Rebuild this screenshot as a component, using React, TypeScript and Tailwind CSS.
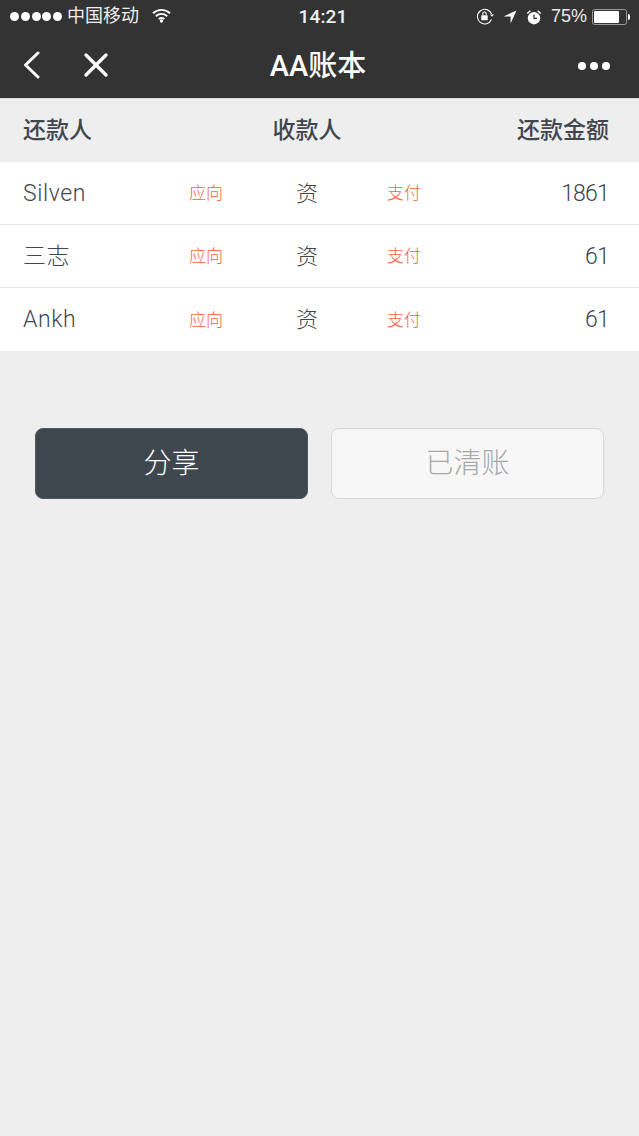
const font = "font-['Liberation_Sans','Noto_Sans_CJK_SC',sans-serif]";

const rows = [
  { name: 'Silven', amount: '1861' },
  { name: '三志', amount: '61' },
  { name: 'Ankh', amount: '61' },
];

function StatusBar() {
  return (
    <div className="flex h-[33px] items-center text-white">
      <div className="ml-[10px] flex gap-[1.75px]">
        {[0, 1, 2, 3, 4].map(i => (
          <span key={i} className="h-[9px] w-[9px] rounded-full bg-white" />
        ))}
      </div>
      <span className="ml-[5px] text-[18px] leading-[33px] text-[#eeeeee]">中国移动</span>
      <svg className="ml-[13px] mt-[-2px]" width="19" height="15" viewBox="0 0 19 15" fill="none" stroke="white" strokeWidth="1.9">
        <path d="M1 5.2C6 .8 13 .8 18 5.2" />
        <path d="M3.8 8.2c3.4-2.9 8-2.9 11.4 0" />
        <path d="M6.7 11c1.7-1.3 3.9-1.3 5.6 0" />
        <circle cx="9.5" cy="13" r="1.7" fill="white" stroke="none" />
      </svg>
      <span className="ml-[127px] w-[50px] text-center font-['Roboto',sans-serif] text-[19px] font-medium leading-[33px] tracking-[0.2px] text-[#f2f2f2]">14:21</span>
      <svg className="ml-[128px]" width="19" height="17" viewBox="0 0 19 17" fill="none" stroke="white" strokeWidth="1.1">
        <path d="M15.5 11.5A7.3 7.3 0 1 1 15.6 6" />
        <path d="M14 6.6h4l-2 2.2z" fill="white" stroke="none" />
        <rect x="5.3" y="7.3" width="6.4" height="5" rx=".6" fill="white" stroke="none" />
        <path d="M6.8 7.3V5.7a1.7 1.7 0 0 1 3.4 0v1.6" />
      </svg>
      <svg className="ml-[8px]" width="14" height="14" viewBox="0 0 14 14" fill="white">
        <path d="M13.5.5 7.6 13.5V6.4H.5z" />
      </svg>
      <svg className="ml-[9px]" width="16" height="16" viewBox="0 0 16 16" fill="white">
        <circle cx="8" cy="9.2" r="6.2" />
        <path d="M8 5.4v4h3" fill="none" stroke="#333333" strokeWidth="1.2" />
        <path d="M.8 4 3.8 1.2l1 1L1.8 5zM15.2 4l-3-2.8-1 1 3 2.8z" />
      </svg>
      <span className="ml-[9px] text-[18px] leading-[33px] text-[#e8e8e8]">75%</span>
      <div className="ml-[5px] flex items-center">
        <div className="h-[16px] w-[35px] rounded-[2.5px] border border-[#999999] p-[1px]">
          <div className="h-full w-[25px] rounded-[1px] bg-white" />
        </div>
        <span className="ml-[1px] h-[6px] w-[2px] rounded-r-full bg-white" />
      </div>
    </div>
  );
}

function NavBar() {
  return (
    <div className="flex h-[65px] items-center text-white">
      <svg className="ml-[23px] mt-[-1px]" width="18" height="28" viewBox="0 0 18 28" fill="none" stroke="white" strokeWidth="3" strokeLinecap="round" strokeLinejoin="round">
        <path d="M15 2 2.5 14 15 26" />
      </svg>
      <svg className="ml-[43px] mt-[-1px]" width="24" height="24" viewBox="0 0 24 24" fill="none" stroke="white" strokeWidth="3.2" strokeLinecap="round">
        <path d="M2 2l20 20M22 2 2 22" />
      </svg>
      <span className="ml-[160px] w-[100px] text-center font-['Roboto','Noto_Sans_CJK_SC',sans-serif] text-[29px] font-medium leading-[34px]">AA账本</span>
      <div className="ml-[210px] flex gap-[4px]">
        <span className="h-[8px] w-[8px] rounded-full bg-white" />
        <span className="h-[8px] w-[8px] rounded-full bg-white" />
        <span className="h-[8px] w-[8px] rounded-full bg-white" />
      </div>
    </div>
  );
}

export default function App() {
  return (
    <div className={`${font} min-h-[1136px] w-[639px] bg-[#eeeeee]`}>
      <div className="h-[99px] border-b border-[#dddddd] bg-[#333333]">
        <StatusBar />
        <NavBar />
      </div>

      <div className="grid h-[63px] grid-cols-[216px_136px_1fr] items-center pl-[23px] pr-[30px] text-[23px] font-medium text-[#3f464e]">
        <span>还款人</span>
        <span className="text-center">收款人</span>
        <span className="text-right">还款金额</span>
      </div>

      <div className="bg-white">
        {rows.map((r, i) => (
          <div
            key={r.name}
            className={`grid h-[63px] grid-cols-[150px_66px_136px_58px_1fr] items-center pl-[23px] pr-[30px] font-['Roboto','Noto_Sans_CJK_SC',sans-serif] text-[23px] font-light text-[#3f464e] ${i < rows.length - 1 ? 'border-b border-[#e6e6e6]' : ''}`}
          >
            <span className="mt-[2px] tracking-[0.6px]">{r.name}</span>
            <span className="mt-[2px] text-center text-[17px] text-[#fa5f3c]">应向</span>
            <span className="text-center text-[22px]">资</span>
            <span className="mt-[2px] text-center text-[17px] text-[#fa5f3c]">支付</span>
            <span className="mt-[2px] text-right tracking-[-0.8px]">{r.amount}</span>
          </div>
        ))}
      </div>

      <div className="mt-[77px] flex gap-[23px] pl-[35px]">
        <button type="button" className="h-[71px] w-[273px] rounded-[8px] border border-[#50575e] bg-[#3e464e] text-[28px] font-light text-white">
          分享
        </button>
        <button type="button" className="h-[71px] w-[273px] rounded-[8px] border border-[#d8d8d8] bg-[#f7f7f7] text-[28px] font-light text-[#a8a8a8]">
          已清账
        </button>
      </div>
    </div>
  );
}
